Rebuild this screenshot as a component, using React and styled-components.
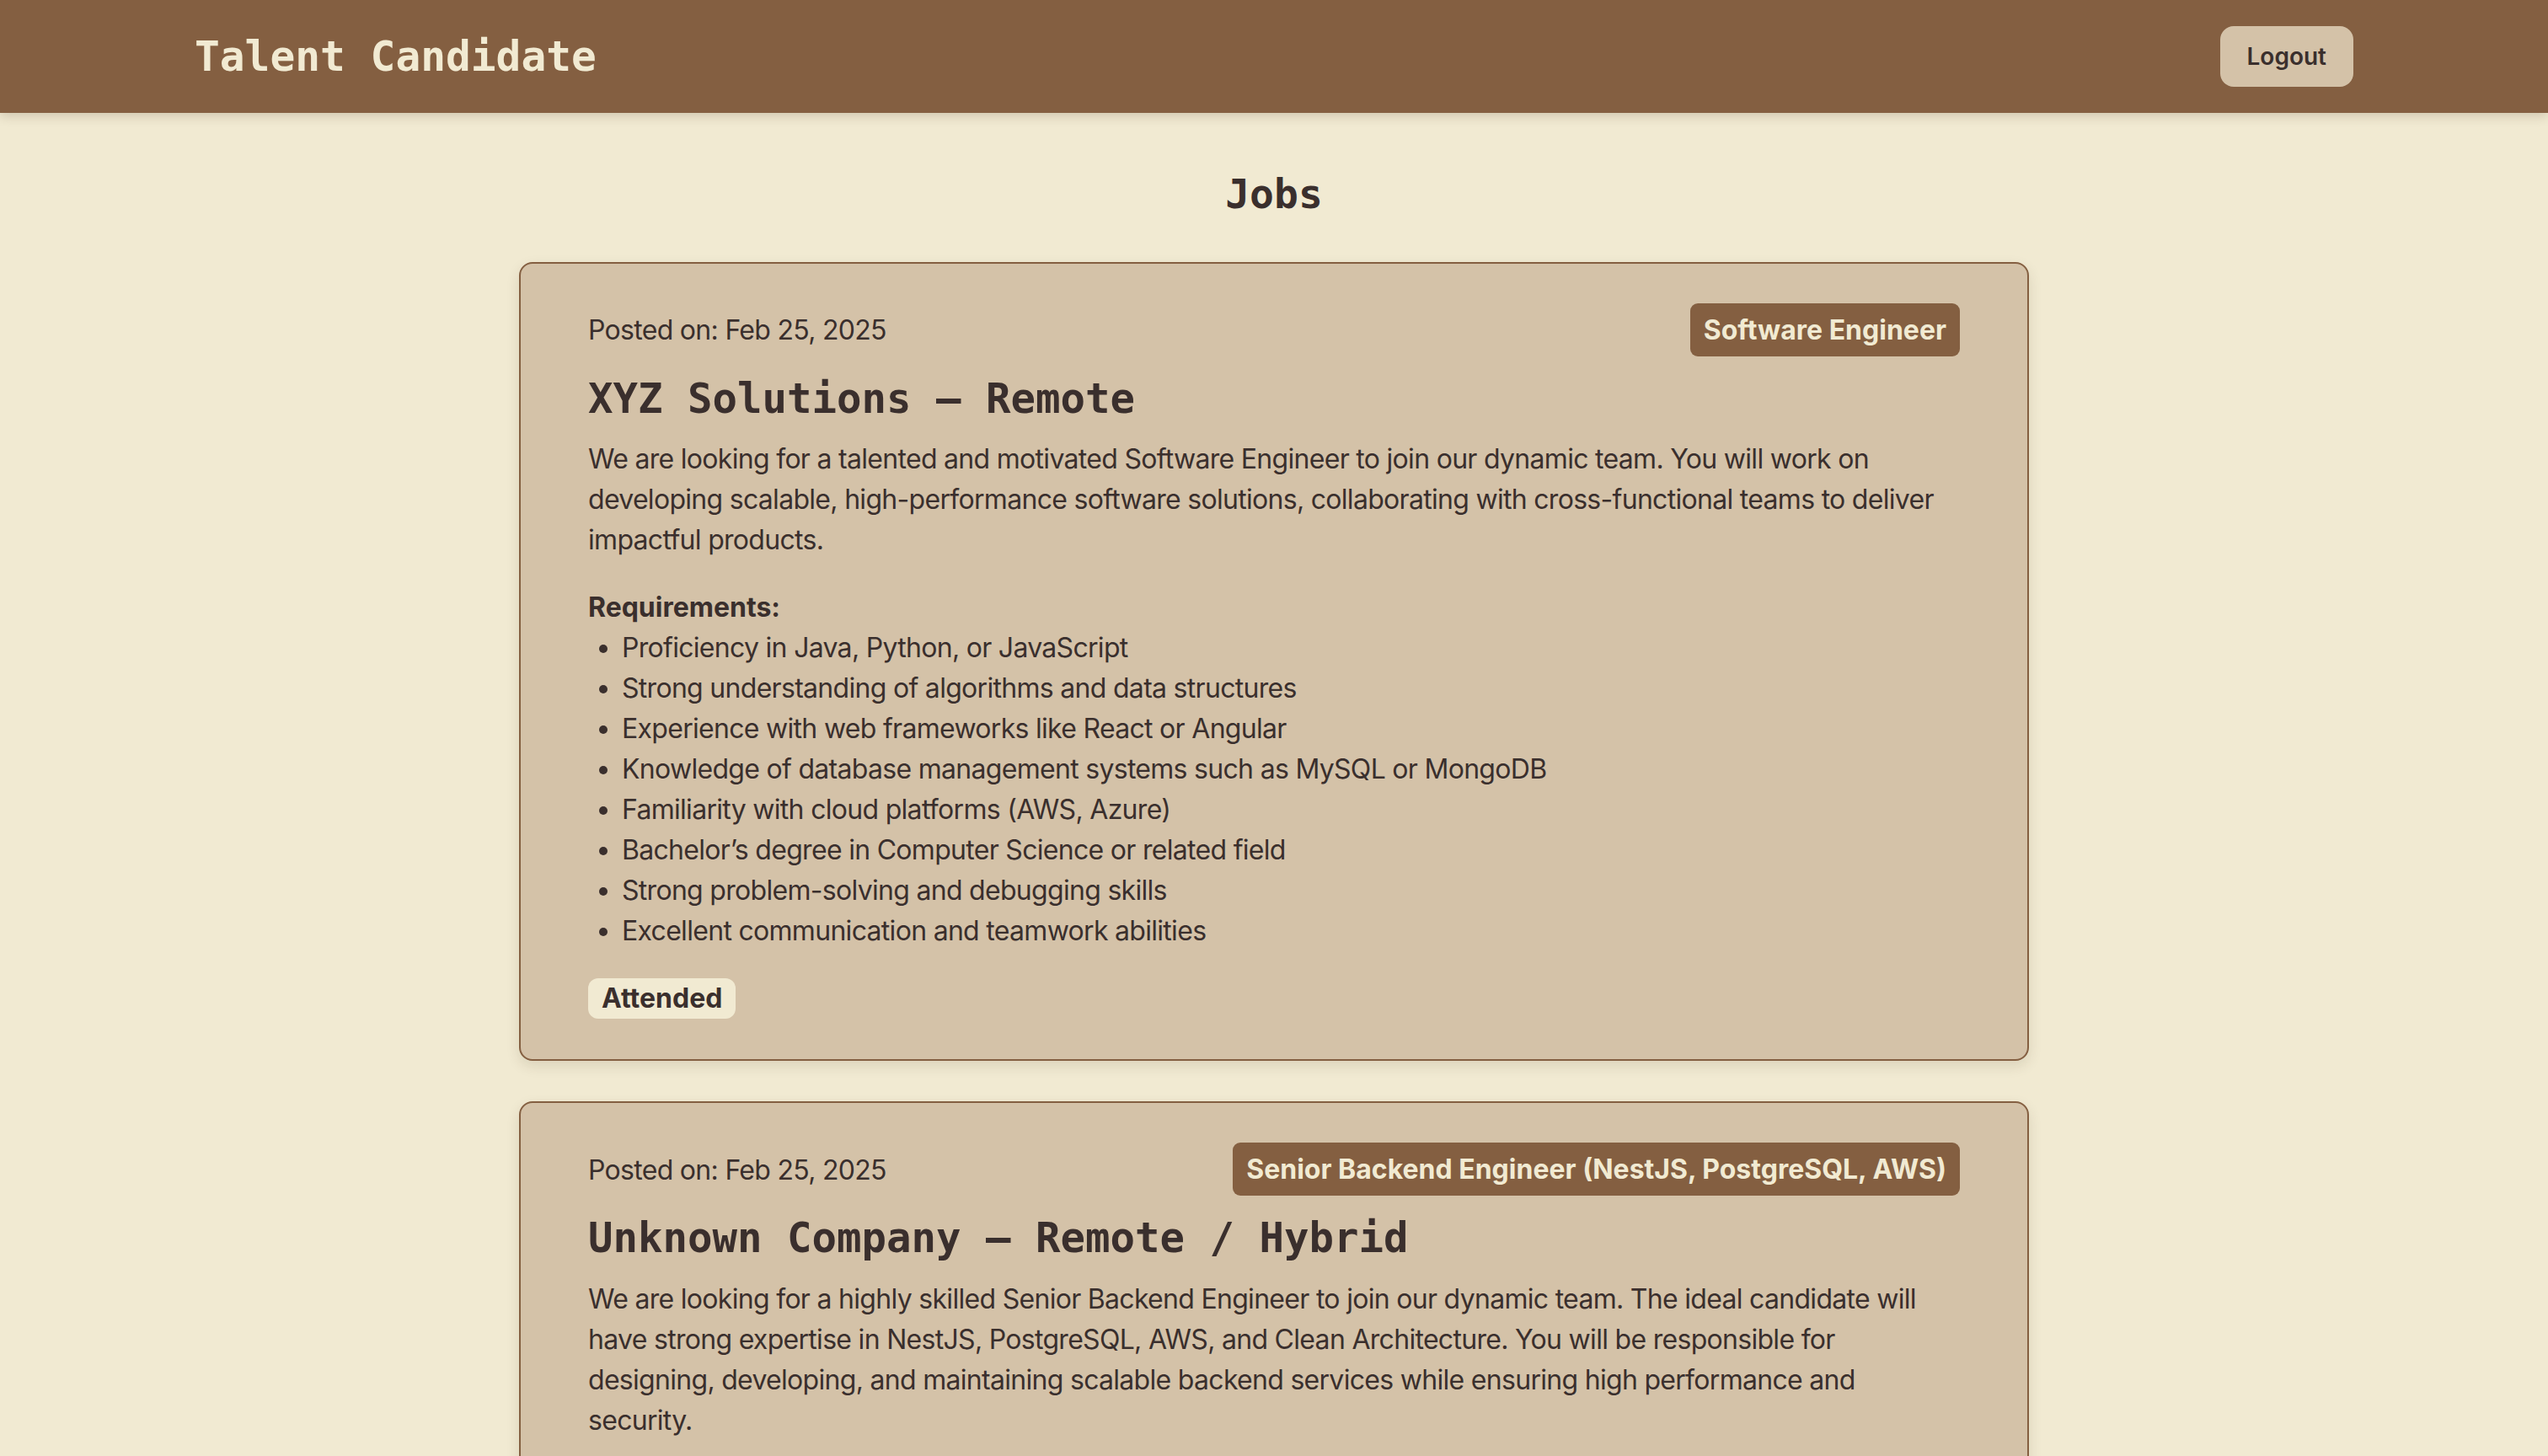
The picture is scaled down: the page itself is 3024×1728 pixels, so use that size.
import styled, { createGlobalStyle } from 'styled-components';

const jobs = [
  {
    id: 1,
    postedOn: 'Feb 25, 2025',
    role: 'Software Engineer',
    title: 'XYZ Solutions – Remote',
    description:
      'We are looking for a talented and motivated Software Engineer to join our dynamic team. You will work on developing scalable, high-performance software solutions, collaborating with cross-functional teams to deliver impactful products.',
    requirements: [
      'Proficiency in Java, Python, or JavaScript',
      'Strong understanding of algorithms and data structures',
      'Experience with web frameworks like React or Angular',
      'Knowledge of database management systems such as MySQL or MongoDB',
      'Familiarity with cloud platforms (AWS, Azure)',
      'Bachelor’s degree in Computer Science or related field',
      'Strong problem-solving and debugging skills',
      'Excellent communication and teamwork abilities',
    ],
    status: 'Attended',
  },
  {
    id: 2,
    postedOn: 'Feb 25, 2025',
    role: 'Senior Backend Engineer (NestJS, PostgreSQL, AWS)',
    title: 'Unknown Company – Remote / Hybrid',
    description:
      'We are looking for a highly skilled Senior Backend Engineer to join our dynamic team. The ideal candidate will have strong expertise in NestJS, PostgreSQL, AWS, and Clean Architecture. You will be responsible for designing, developing, and maintaining scalable backend services while ensuring high performance and security.',
    requirements: [
      '5+ years of experience in backend development',
      'Strong experience with NestJS and TypeScript',
      'Deep knowledge of PostgreSQL and database design',
      'Hands-on experience with AWS services (EC2, S3, RDS, Lambda)',
      'Understanding of Clean Architecture and SOLID principles',
    ],
    status: 'Attended',
  },
];

export default function App() {
  return (
    <>
      <GlobalStyle />
      <Header>
        <HeaderInner>
          <Brand>Talent Candidate</Brand>
          <LogoutButton type="button">Logout</LogoutButton>
        </HeaderInner>
      </Header>

      <Main>
        <PageTitle>Jobs</PageTitle>
        <JobList>
          {jobs.map((job) => (
            <JobCard key={job.id}>
              <CardTop>
                <PostedOn>Posted on: {job.postedOn}</PostedOn>
                <RoleTag>{job.role}</RoleTag>
              </CardTop>
              <JobTitle>{job.title}</JobTitle>
              <Description>{job.description}</Description>
              <ReqLabel>Requirements:</ReqLabel>
              <ReqList>
                {job.requirements.map((req) => (
                  <li key={req}>{req}</li>
                ))}
              </ReqList>
              <StatusBadge>{job.status}</StatusBadge>
            </JobCard>
          ))}
        </JobList>
      </Main>
    </>
  );
}

const GlobalStyle = createGlobalStyle`
  html,
  body {
    margin: 0;
    padding: 0;
    background-color: #f1ead2;
    font-family: Inter, "Noto Sans", sans-serif;
    color: #3a2f2d;
  }

  * {
    box-sizing: border-box;
  }
`;

const mono = `"DejaVu Sans Mono", "Liberation Mono", monospace`;

// regular-weight body copy runs a little tighter than Inter's default
const bodyText = `
  font-size: 32px;
  line-height: 48px;
  letter-spacing: -0.7px;
`;

const Header = styled.header`
  height: 134px;
  background-color: #845f41;
  box-shadow: 0 4px 12px rgba(60, 40, 20, 0.18);
`;

const HeaderInner = styled.div`
  max-width: 2562px;
  height: 100%;
  margin: 0 auto;
  display: flex;
  align-items: center;
  justify-content: space-between;
`;

const Brand = styled.h1`
  margin: 0;
  font-family: ${mono};
  font-size: 49.5px;
  font-weight: 700;
  color: #f1ead2;
`;

const LogoutButton = styled.button`
  height: 72px;
  padding: 0 32px;
  border: none;
  border-radius: 16px;
  background-color: #d4c2a8;
  color: #3a2f2d;
  font-family: Inter, sans-serif;
  font-size: 28px;
  font-weight: 600;
  cursor: pointer;
`;

const Main = styled.main`
  padding: 68px 0 96px;
`;

const PageTitle = styled.h2`
  margin: 0 0 51px;
  text-align: center;
  font-family: ${mono};
  font-size: 48px;
  line-height: 1.2;
  font-weight: 700;
`;

const JobList = styled.div`
  width: 1792px;
  margin: 0 auto;
  display: flex;
  flex-direction: column;
  gap: 48px;
`;

const JobCard = styled.article`
  background-color: #d4c2a8;
  border: 2px solid #845f41;
  border-radius: 16px;
  padding: 47px 80px 48px;
  box-shadow: 0 6px 16px rgba(60, 40, 20, 0.12);
`;

const CardTop = styled.div`
  display: flex;
  align-items: center;
  justify-content: space-between;
`;

const PostedOn = styled.span`
  ${bodyText}
  padding-top: 2px;
`;

const RoleTag = styled.span`
  padding: 8px 16px;
  border-radius: 9px;
  background-color: #845f41;
  color: #f1ead2;
  font-size: 32px;
  line-height: 47px;
  font-weight: 700;
`;

const JobTitle = styled.h3`
  margin: 22px 0 18px;
  font-family: ${mono};
  font-size: 49px;
  line-height: 1.2;
  font-weight: 700;
`;

const Description = styled.p`
  margin: 0 0 32px;
  ${bodyText}
`;

const ReqLabel = styled.div`
  font-size: 32px;
  line-height: 48px;
  font-weight: 700;
`;

const ReqList = styled.ul`
  margin: 0 0 32px;
  padding-left: 40px;
  ${bodyText}
`;

const StatusBadge = styled.span`
  display: inline-block;
  padding: 4px 16px;
  border-radius: 12px;
  background-color: #f1ead2;
  font-size: 32px;
  line-height: 40px;
  font-weight: 700;
`;
